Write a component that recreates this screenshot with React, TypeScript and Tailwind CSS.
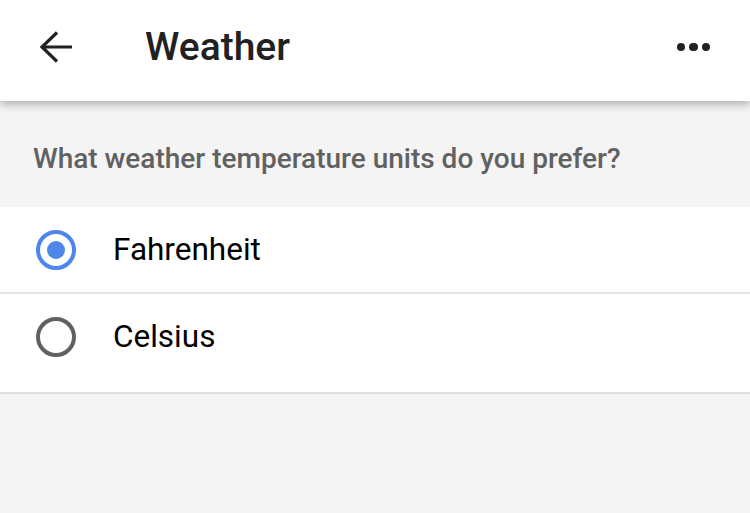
import React, { useState } from "react";

const options = ["Fahrenheit", "Celsius"];

const Radio = ({ checked }: { checked: boolean }) => (
  <span
    className={
      checked
        ? "flex h-10 w-10 items-center justify-center rounded-full border-4 border-[#4f86ec]"
        : "flex h-10 w-10 items-center justify-center rounded-full border-4 border-[#616161]"
    }
  >
    {checked && <span className="h-[18px] w-[18px] rounded-full bg-[#4f86ec]" />}
  </span>
);

const App = () => {
  const [unit, setUnit] = useState("Fahrenheit");

  return (
    <div
      className="flex h-[513px] w-[750px] flex-col overflow-hidden bg-[#f4f4f4]"
      style={{ fontFamily: "Roboto, 'Liberation Sans', sans-serif" }}
    >
      {/* top bar */}
      <div className="relative z-10 flex h-[101px] items-center bg-white pb-[7px] shadow-[0_3px_9px_rgba(0,0,0,0.3)]">
        <button className="ml-[38px] flex h-9 w-9 items-center justify-center">
          <svg width="36" height="36" viewBox="0 0 36 36" fill="none" stroke="#212121" strokeWidth="3.2">
            <path d="M34 18H3.5M19 3.5L4 18l15 14.5" />
          </svg>
        </button>
        <h1 className="ml-[71px] text-[39px] font-medium text-[#212121]">Weather</h1>
        <div className="ml-auto mr-[40px] flex gap-[4px]">
          <span className="h-[8.5px] w-[8.5px] rounded-full bg-[#212121]" />
          <span className="h-[8.5px] w-[8.5px] rounded-full bg-[#212121]" />
          <span className="h-[8.5px] w-[8.5px] rounded-full bg-[#212121]" />
        </div>
      </div>

      <p className="px-[33px] pt-[39px] pb-[30px] text-[28px] font-medium leading-[37px] text-[#616161]">
        What weather temperature units do you prefer?
      </p>

      <div className="border-b-2 border-[#e0e0e0] bg-white pb-[13px]">
        {options.map((opt, i) => (
          <label
            key={opt}
            onClick={() => setUnit(opt)}
            className={
              i === 0
                ? "flex h-[87px] cursor-pointer items-center border-b-2 border-[#e5e5e5] pl-9"
                : "flex h-[85px] cursor-pointer items-center pl-9"
            }
          >
            <Radio checked={unit === opt} />
            <span className="ml-[37px] text-[31.5px] text-black">{opt}</span>
          </label>
        ))}
      </div>
    </div>
  );
};

export default App;
